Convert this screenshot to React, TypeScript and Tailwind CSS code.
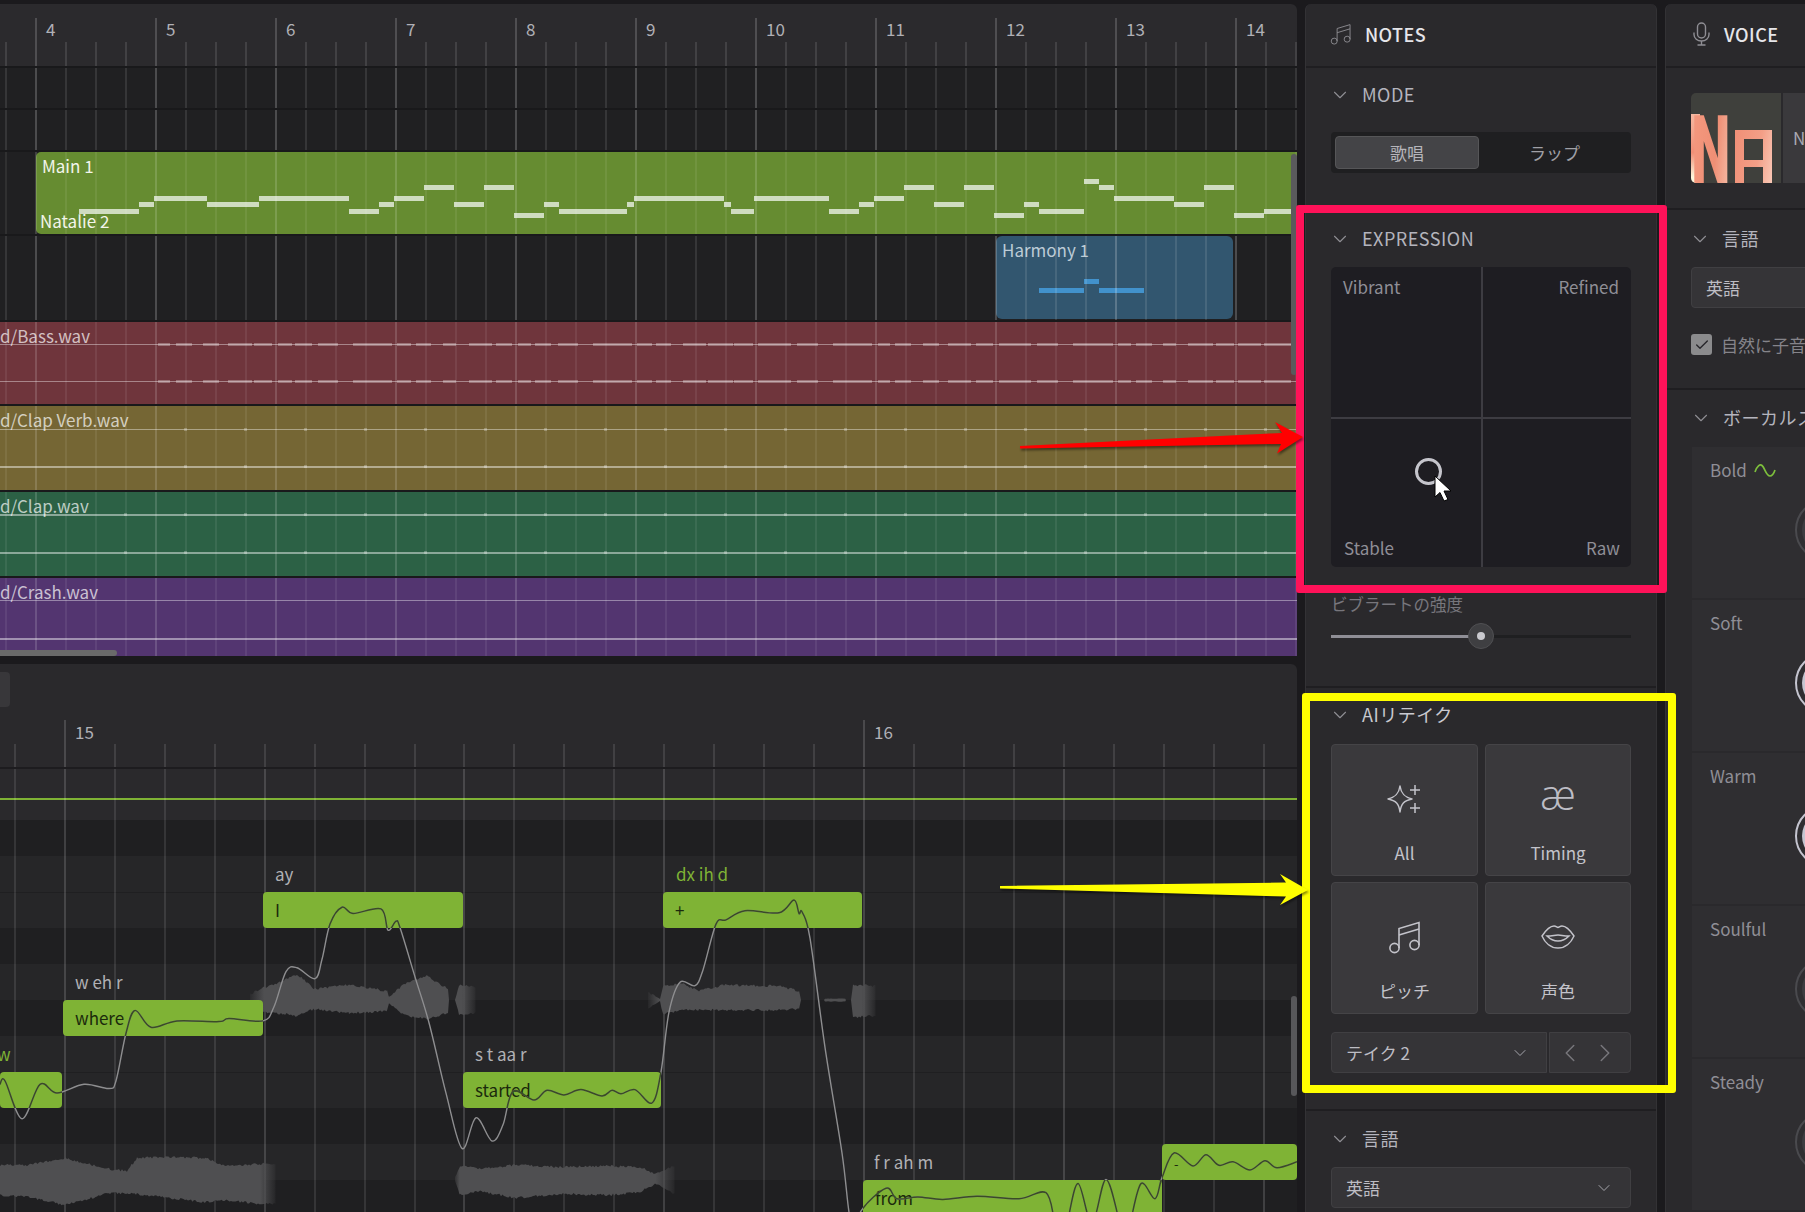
import { ChevronDown, ChevronLeft, ChevronRight, Check } from 'lucide-react';

// bar/beat grids
const topLines = Array.from({ length: 44 }, (_, i) => 5 + i * 30);
const rollLines = Array.from({ length: 26 }, (_, i) => 14 + i * 49.94);
const topBars = [4, 5, 6, 7, 8, 9, 10, 11, 12, 13, 14];

// [left, right, top]
const mainNotes = [
  [79, 139, 211], [139, 154, 204], [154, 207, 198], [207, 259, 204], [259, 349, 198], [349, 379, 211],
  [379, 394, 204], [394, 424, 198], [424, 454, 187], [454, 484, 204], [484, 514, 187], [514, 544, 215],
  [544, 559, 204], [559, 627, 211], [627, 634, 204], [634, 724, 198], [724, 731, 204], [731, 754, 211],
  [754, 829, 198], [829, 859, 211], [859, 874, 204], [874, 904, 198], [904, 934, 187], [934, 964, 204],
  [964, 994, 187], [994, 1024, 215], [1024, 1039, 204], [1039, 1084, 211], [1084, 1099, 181], [1099, 1114, 187],
  [1114, 1174, 198], [1174, 1204, 204], [1204, 1234, 187], [1234, 1264, 215], [1264, 1291, 211],
];
const harmonyNotes = [[1039, 1084, 290], [1084, 1099, 281], [1099, 1144, 290]];

const bassDashes = [
  [158, 170], [176, 192], [203, 219], [228, 252], [254, 272], [278, 292], [295, 312], [318, 338], [353, 392],
  [397, 411], [416, 431], [443, 456], [469, 492], [496, 512], [518, 531], [535, 551], [558, 578], [593, 632],
  [637, 652], [656, 671], [683, 706], [708, 733], [734, 753], [758, 791], [797, 818], [833, 872], [878, 890],
  [895, 911], [923, 939], [948, 971], [976, 993], [999, 1031], [1037, 1058], [1073, 1113], [1118, 1131],
  [1136, 1152], [1163, 1176], [1188, 1213], [1216, 1234], [1238, 1261], [1264, 1291],
];

const rollStripes = [
  'bg-[#1f1f21]', 'bg-[#262628]', 'bg-[#262628] border-t border-[#1f1f21]', 'bg-[#1f1f21]', 'bg-[#262628]', 'bg-[#1f1f21]',
  'bg-[#262628]', 'bg-[#262628] border-t border-[#1f1f21]', 'bg-[#1f1f21]', 'bg-[#262628]', 'bg-[#1f1f21]',
];

// vocal notes in page coordinates
const vocalNotes = [
  { x: 0, w: 62, y: 1072, h: 36, text: '' },
  { x: 63, w: 200, y: 1000, h: 36, text: 'where' },
  { x: 263, w: 200, y: 892, h: 36, text: 'I' },
  { x: 463, w: 198, y: 1072, h: 36, text: 'started' },
  { x: 663, w: 199, y: 892, h: 36, text: '+' },
  { x: 863, w: 299, y: 1180, h: 60, text: 'from' },
  { x: 1162, w: 135, y: 1144, h: 36, text: '-' },
];
const phonemes = [
  { x: -3, y: 1055, text: 'w', green: true },
  { x: 75, y: 983, text: 'w eh r', green: false },
  { x: 275, y: 875, text: 'ay', green: false },
  { x: 475, y: 1055, text: 's t aa r', green: false },
  { x: 676, y: 875, text: 'dx ih d', green: true },
  { x: 874, y: 1163, text: 'f r ah m', green: false },
];

// pitch line, y measured off the crop at 2.84x
const pitch = [
  [0, 1205], [5, 1195], [22, 1303], [40, 1205], [57, 1230], [84, 1205], [109, 1217], [116, 1195], [126, 1060], [135, 995],
  [151, 1043], [177, 1025], [219, 1027], [229, 1018], [263, 1025], [274, 985], [286, 885], [297, 874], [315, 905], [322, 850],
  [330, 750], [342, 702], [353, 720], [381, 707], [388, 767], [396, 742], [400, 760], [415, 900], [429, 1030], [446, 1230],
  [462, 1387], [476, 1300], [492, 1366], [503, 1320], [513, 1225], [534, 1250], [547, 1222], [564, 1235], [581, 1220],
  [602, 1238], [612, 1222], [621, 1232], [635, 1220], [652, 1258], [661, 1170], [669, 1000], [680, 915], [695, 925],
  [703, 880], [716, 750], [726, 738], [745, 712], [779, 718], [794, 682], [799, 720], [802, 715], [810, 790], [825, 1100],
  [842, 1400], [849, 1568], [855, 1640], [861, 1565], [886, 1500], [897, 1530], [918, 1525], [943, 1532], [977, 1523],
  [1019, 1530], [1046, 1513], [1055, 1600], [1061, 1640], [1067, 1600], [1078, 1487], [1092, 1600], [1106, 1475], [1120, 1600],
  [1125, 1640], [1130, 1600], [1141, 1487], [1155, 1530], [1162, 1470], [1174, 1400], [1193, 1437], [1206, 1405], [1219, 1435],
  [1233, 1425], [1250, 1448], [1265, 1422], [1277, 1442], [1297, 1425],
].map(([x, v]) => [x, 660 + v / 2.84]);

function smoothPath(pts: number[][]) {
  let d = `M${pts[0][0]} ${pts[0][1]}`;
  for (let i = 0; i < pts.length - 1; i++) {
    const p0 = pts[Math.max(i - 1, 0)];
    const p1 = pts[i];
    const p2 = pts[i + 1];
    const p3 = pts[Math.min(i + 2, pts.length - 1)];
    const c1 = [p1[0] + (p2[0] - p0[0]) / 6, p1[1] + (p2[1] - p0[1]) / 6];
    const c2 = [p2[0] - (p3[0] - p1[0]) / 6, p2[1] - (p3[1] - p1[1]) / 6];
    d += `C${c1[0].toFixed(1)} ${c1[1].toFixed(1)} ${c2[0].toFixed(1)} ${c2[1].toFixed(1)} ${p2[0]} ${p2[1].toFixed(1)}`;
  }
  return d;
}

// envelope [x, up, down] around a centre line, with a bit of jitter
function wavePath(cy: number, keys: number[][]) {
  const top: string[] = [];
  const bottom: string[] = [];
  const noise = (n: number) => {
    const s = Math.sin(n * 12.9898) * 43758.5453;
    return (s - Math.floor(s)) * 2 - 1;
  };
  for (let k = 0; k < keys.length - 1; k++) {
    const [x0, u0, d0] = keys[k];
    const [x1, u1, d1] = keys[k + 1];
    for (let x = x0; x < x1; x += 1.5) {
      const t = (x - x0) / (x1 - x0);
      const u = u0 + (u1 - u0) * t;
      const dn = d0 + (d1 - d0) * t;
      const j = Math.min(1.2, u / 6);
      top.push(`${x.toFixed(1)} ${(cy - u - noise(x) * j).toFixed(1)}`);
      bottom.unshift(`${x.toFixed(1)} ${(cy + dn + noise(x + 7) * j).toFixed(1)}`);
    }
  }
  return `M${top.join('L')}L${bottom.join('L')}Z`;
}

const waves = [
  {
    id: 'w1', x0: 248, x1: 478, fadeIn: 0.07, fadeOut: 0.93, cy: 1000,
    d: wavePath(1000, [[250, 6, 6], [263, 12, 12], [285, 20, 14], [297, 26, 16], [314, 11, 9], [349, 15, 13], [387, 9, 11], [389, 3, 3], [404, 16, 15], [427, 24, 19], [448, 11, 13], [449, 0, 0], [455, 0, 0], [459, 15, 14], [476, 13, 13]]),
  },
  {
    id: 'w2', x0: 646, x1: 878, fadeIn: 0.06, fadeOut: 0.93, cy: 1000,
    d: wavePath(1000, [[648, 8, 8], [660, 1, 1], [663, 14, 14], [682, 17, 10], [699, 9, 10], [724, 15, 10], [779, 14, 10], [799, 9, 9], [801, 0, 0], [824, 0, 0], [825, 1.5, 1.5], [845, 1.5, 1.5], [846, 0, 0], [851, 0, 0], [853, 15, 17], [876, 14, 16]]),
  },
  {
    id: 'w3', x0: -20, x1: 278, fadeIn: 0, fadeOut: 0.94, cy: 1179,
    d: wavePath(1179, [[0, 14, 16], [30, 14, 18], [64, 21, 26], [110, 10, 14], [127, 8, 14], [137, 21, 15], [170, 22, 19], [205, 21, 23], [225, 13, 21], [262, 15, 25], [276, 15, 25]]),
  },
  {
    id: 'w4', x0: 453, x1: 678, fadeIn: 0.03, fadeOut: 0.9, cy: 1179,
    d: wavePath(1179, [[455, 2, 2], [460, 13, 16], [480, 10, 12], [515, 14, 19], [560, 12, 15], [610, 13, 16], [640, 12, 13], [655, 5, 5], [664, 8, 8], [676, 14, 16]]),
  },
];

function Grid({ lines, isBar, bar = 'bg-white/20', beat = 'bg-white/10' }: {
  lines: number[]; isBar: (x: number, i: number) => boolean; bar?: string; beat?: string;
}) {
  return (
    <div className="absolute inset-0 pointer-events-none">
      {lines.map((x, i) => (
        <div key={x} className={`absolute top-0 bottom-0 w-[2px] ${isBar(x, i) ? bar : beat}`} style={{ left: x }} />
      ))}
    </div>
  );
}

const isTopBar = (x: number) => (x - 35) % 120 === 0;
const isRollBar = (_: number, i: number) => i % 4 === 1;

function Bar({ left, right, top, offset, color }: { left: number; right: number; top: number; offset: number; color: string }) {
  return <div className={`absolute h-[5px] ${color}`} style={{ left, width: right - left, top: top - offset - 2 }} />;
}

function AudioTrack({ color, name, lineTops, thick, dots, dashes }: {
  color: string; name: string; lineTops: number[]; thick?: boolean[]; dots?: number; dashes?: boolean;
}) {
  return (
    <>
      <div className={`absolute inset-0 ${color}`} />
      <span className="absolute left-0 top-[2px] text-[17px] leading-6 text-white/70 whitespace-nowrap">{name}</span>
      {lineTops.map((top, n) => (
        <div key={top} className={`absolute left-0 right-0 ${thick?.[n] ? 'h-[2px] bg-white/45' : 'h-px bg-white/40'}`} style={{ top }}>
          {dashes && bassDashes.map(([a, b]) => (
            <div key={a} className="absolute -top-px h-[3px] bg-white/30" style={{ left: a, width: b - a }} />
          ))}
          {dots !== undefined && Array.from({ length: 20 }, (_, i) => dots + i * 60).map((x) => (
            <div key={x} className="absolute -top-px h-[3px] w-[3px] bg-white/25" style={{ left: x }} />
          ))}
        </div>
      ))}
      <Grid lines={topLines} isBar={isTopBar} bar="bg-white/15" beat="bg-white/[0.07]" />
    </>
  );
}

function NotesIcon({ size, width = 1.4, className }: { size: number; width?: number; className?: string }) {
  return (
    <svg width={size} height={size} viewBox="0 0 34 34" fill="none" stroke="currentColor" strokeWidth={width} className={className}>
      <circle cx="6.5" cy="28" r="4.6" />
      <circle cx="26.5" cy="25" r="4.6" />
      <path d="M11 28V8.5L31 2.5V25" />
      <path d="M11 15L31 9" />
    </svg>
  );
}

function SectionHead({ label, bright }: { label: string; bright?: boolean }) {
  return (
    <div className="flex items-center h-[22px] -mt-px">
      <ChevronDown size={22} strokeWidth={1.2} className="text-[#8f8e94] -ml-[2px] mt-px" />
      <span className={`ml-[11px] text-[18px] tracking-[0.5px] leading-[22px] whitespace-nowrap ${bright ? 'text-[#c9c9d0] text-[17px] tracking-[0.4px]' : 'text-[#b4b4bd]'}`}>{label}</span>
    </div>
  );
}

function Select({ label, className }: { label: string; className?: string }) {
  return (
    <div className={`flex items-center justify-between h-[41px] bg-[#353437] border border-[#403f42] rounded-[4px] pl-[14px] pr-[16px] text-[17px] text-[#bdbdc4] ${className ?? ''}`}>
      <span>{label}</span>
      <ChevronDown size={20} strokeWidth={1.2} className="text-[#a5a5ab]" />
    </div>
  );
}

function RetakeButton({ label, children }: { label: string; children: React.ReactNode }) {
  return (
    <div className="flex flex-col items-center bg-[#3a393c] border border-[#454447] rounded-[4px] h-[132px] text-[#c3c3ca]">
      <div className="h-[68px] w-full flex items-end justify-center pb-[1px]">{children}</div>
      <span className="mt-[28px] text-[17px] leading-6 text-[#c3c3ca]">{label}</span>
    </div>
  );
}

function Knob({ ring, disc }: { ring: string; disc: string }) {
  return (
    <div className={`ml-[85px] mt-[17px] w-[62px] h-[62px] rounded-full border-2 flex items-center justify-center ${ring}`}>
      <div className={`w-[48px] h-[48px] rounded-full ${disc}`} />
    </div>
  );
}

export default function App() {
  return (
    <div className="relative w-[1805px] h-[1212px] overflow-hidden bg-[#1b1a1d] flex gap-2 pt-1 font-['Noto_Sans_CJK_JP','Noto_Sans',sans-serif]">
      {/* Arrangement + piano roll */}
      <div className="w-[1297px] flex-none flex flex-col gap-2">
        <div className="relative h-[652px] flex-none rounded-tr-md overflow-hidden bg-[#19191b] flex flex-col gap-[2px]">
          {/* ruler */}
          <div className="relative h-[62px] flex-none bg-[#2b2a2d]">
            {topLines.map((x) => (
              <div key={x} className={`absolute bottom-0 w-[2px] ${isTopBar(x) ? 'top-[14px] bg-[#4f4e51]' : 'top-[38px] bg-[#424144]'}`} style={{ left: x }} />
            ))}
            {topBars.map((n, i) => (
              <span key={n} className="absolute top-[13px] text-[17px] leading-6 text-[#b0b0b6]" style={{ left: 46 + i * 120 }}>{n}</span>
            ))}
          </div>
          <div className="relative h-[40px] flex-none bg-[#202022]"><Grid lines={topLines} isBar={isTopBar} /></div>
          <div className="relative h-[40px] flex-none bg-[#202022]"><Grid lines={topLines} isBar={isTopBar} /></div>

          {/* main vocal */}
          <div className="relative h-[82px] flex-none bg-[#202022]">
            <div className="absolute left-[36px] right-0 inset-y-0 bg-[#668c31] rounded-l-[5px]" />
            {mainNotes.map(([l, r, t]) => <Bar key={l} left={l} right={r} top={t} offset={152} color="bg-[#cfdcc0]" />)}
            <span className="absolute left-[42px] top-[2px] text-[17px] leading-6 text-[#f2f5ea]">Main 1</span>
            <span className="absolute left-[40px] top-[57px] text-[17px] leading-6 text-[#f2f5ea]">Natalie 2</span>
            <Grid lines={topLines} isBar={isTopBar} bar="bg-white/15" beat="bg-white/[0.07]" />
          </div>

          {/* harmony */}
          <div className="relative h-[84px] flex-none bg-[#202022]">
            <div className="absolute left-[996px] w-[237px] top-0 h-[83px] bg-[#32566f] rounded-[6px]" />
            {harmonyNotes.map(([l, r, t]) => <Bar key={l} left={l} right={r} top={t} offset={236} color="bg-[#4292cc]" />)}
            <span className="absolute left-[1002px] top-[2px] text-[17px] leading-6 text-[#bccbd6]">Harmony 1</span>
            <Grid lines={topLines} isBar={isTopBar} />
          </div>

          <div className="relative h-[82px] flex-none"><AudioTrack color="bg-[#6f353c]" name="d/Bass.wav" lineTops={[22, 59]} dashes /></div>
          <div className="relative h-[84px] flex-none"><AudioTrack color="bg-[#756634]" name="d/Clap Verb.wav" lineTops={[23, 60]} thick={[false, true]} dots={184} /></div>
          <div className="relative h-[84px] flex-none"><AudioTrack color="bg-[#2c6145]" name="d/Clap.wav" lineTops={[22, 60]} thick={[true, true]} dots={124} /></div>
          <div className="relative h-[78px] flex-none"><AudioTrack color="bg-[#533570]" name="d/Crash.wav" lineTops={[22, 60]} thick={[false, true]} /></div>

          {/* scrollbars */}
          <div className="absolute right-0 top-[150px] w-[6px] h-[221px] rounded-[3px] bg-[#5a5a5c]" />
          <div className="absolute left-0 bottom-0 w-[117px] h-[6px] rounded-r-[3px] bg-[#6a6a6a]" />
        </div>

        {/* Piano roll */}
        <div className="relative flex-1 min-h-0 rounded-tr-md overflow-hidden bg-[#2a292c] flex flex-col">
          <div className="h-[56px] flex-none pt-[8px]">
            <div className="w-[10px] h-[35px] rounded-r-[4px] bg-[#38373a]" />
          </div>
          <div className="relative h-[47px] flex-none">
            {rollLines.map((x, i) => (
              <div key={x} className={`absolute bottom-0 w-[2px] ${i % 16 === 1 ? 'top-0 bg-[#4a494c]' : 'top-[24px] bg-[#414043]'}`} style={{ left: x }} />
            ))}
            <span className="absolute left-[75px] top-0 text-[17px] leading-6 text-[#b0b0b6]">15</span>
            <span className="absolute left-[874px] top-0 text-[17px] leading-6 text-[#b0b0b6]">16</span>
          </div>
          <div className="h-[2px] flex-none bg-[#1d1c1f]" />

          <div className="relative flex-1 min-h-0 overflow-hidden">
            <div className="h-[51px] relative">
              <div className="absolute left-0 right-0 top-[29px] h-[2px] bg-[#7fb235]" />
            </div>
            {rollStripes.map((c, i) => <div key={i} className={`h-[36px] ${c}`} />)}
            <Grid lines={rollLines} isBar={isRollBar} bar="bg-white/15" />

            <svg className="absolute inset-0" width="1297" height="443" viewBox="0 769 1297 443" fill="none">
              <defs>
                {waves.map((w) => (
                  <linearGradient key={w.id} id={w.id} gradientUnits="userSpaceOnUse" x1={w.x0} x2={w.x1} y1="0" y2="0">
                    <stop offset="0" stopColor="#4f4f51" stopOpacity={w.fadeIn === 0 ? 1 : 0} />
                    <stop offset={w.fadeIn} stopColor="#4f4f51" />
                    <stop offset={w.fadeOut} stopColor="#4f4f51" />
                    <stop offset="1" stopColor="#4f4f51" stopOpacity="0" />
                  </linearGradient>
                ))}
              </defs>
              {waves.map((w) => <path key={w.id} d={w.d} fill={`url(#${w.id})`} />)}
            </svg>

            {vocalNotes.map((n) => (
              <div
                key={n.x}
                className="absolute bg-[#7fb335] rounded-[4px] pl-[12px] text-[17px] leading-[36px] text-[#1b2a0c]"
                style={{ left: n.x, top: n.y - 769, width: n.w, height: n.h }}
              >
                {n.text === '-' ? <span className="text-[13px]">-</span> : n.text}
              </div>
            ))}
            {phonemes.map((p) => (
              <span
                key={p.x}
                className={`absolute text-[17px] leading-6 whitespace-nowrap ${p.green ? 'text-[#7fb335]' : 'text-[#b0b0b4]'}`}
                style={{ left: p.x, top: p.y - 769 - 13 }}
              >
                {p.text}
              </span>
            ))}

            {/* pitch line: grey outside the notes, dark over them */}
            <svg className="absolute inset-0" width="1297" height="443" viewBox="0 769 1297 443" fill="none">
              <defs>
                <clipPath id="notes">
                  {vocalNotes.map((n) => <rect key={n.x} x={n.x} y={n.y} width={n.w} height={n.h} />)}
                </clipPath>
              </defs>
              <path d={smoothPath(pitch)} stroke="#8e8e90" strokeWidth="1.4" />
              <path d={smoothPath(pitch)} stroke="#3a4c26" strokeWidth="1.5" clipPath="url(#notes)" />
            </svg>

            <div className="absolute right-0 top-[227px] w-[6px] h-[100px] rounded-[3px] bg-[#57575a]" />
          </div>
        </div>
      </div>

      {/* NOTES */}
      <div className="w-[352px] flex-none bg-[#2a292c] rounded-t-md overflow-hidden flex flex-col border-x border-[#333235]">
        <div className="h-[62px] flex-none flex items-center pl-[24px] pb-[2px]">
          <NotesIcon size={22} className="text-[#8f8e94]" />
          <span className="ml-[13px] text-[18px] font-medium tracking-[0.4px] text-[#e6e6ea]">NOTES</span>
        </div>
        <div className="h-[2px] flex-none bg-[#1f1e21]" />

        <div className="h-[137px] flex-none pt-[16px] px-[25px]">
          <SectionHead label="MODE" />
          <div className="mt-[27px] h-[41px] w-[300px] rounded-[4px] bg-[#1f1f21] p-[4px] flex text-[17px] text-[#a0a0a6]">
            <div className="w-[144px] rounded-[4px] bg-[#444447] border border-[#565658] flex items-center justify-center text-[#b5b5ba] leading-none">歌唱</div>
            <div className="flex-1 flex items-center justify-center pl-[3px] leading-none">ラップ</div>
          </div>
        </div>

        <div className="h-[481px] flex-none pt-[23px] px-[25px]">
          <SectionHead label="EXPRESSION" />
          <div className="relative mt-[18px] w-[300px] h-[300px] rounded-[5px] bg-[#1e1d22] text-[17px] text-[#8f8e96] overflow-hidden">
            <div className="absolute left-[150px] inset-y-0 w-[2px] bg-[#3d3c42]" />
            <div className="absolute top-[150px] inset-x-0 h-[2px] bg-[#3d3c42]" />
            <span className="absolute left-[12px] top-[8px] leading-6">Vibrant</span>
            <span className="absolute right-[12px] top-[8px] leading-6">Refined</span>
            <span className="absolute left-[13px] bottom-[7px] leading-6">Stable</span>
            <span className="absolute right-[11px] bottom-[7px] leading-6">Raw</span>
            <div className="absolute left-[84px] top-[191px] w-[27px] h-[27px] rounded-full border-[3px] border-[#c5c5cc]" />
            <svg className="absolute left-[103px] top-[208px]" width="20" height="28" viewBox="0 0 20 28">
              <path d="M1 1V22L6 17.5L10 26L14 24.5L10 16H17Z" fill="#fff" stroke="#000" strokeWidth="1" />
            </svg>
          </div>
          <div className="mt-[26px] text-[16.5px] leading-[22px] text-[#77767c] whitespace-nowrap">ビブラートの強度</div>
          <div className="relative mt-[8px] h-[26px] flex items-center">
            <div className="w-[150px] h-[3px] bg-[#8f8e96]" />
            <div className="flex-1 h-[3px] bg-[#1f1f21]" />
            <div className="absolute left-[137px] top-0 w-[26px] h-[26px] rounded-full bg-[#3f3f42] border border-[#505053] flex items-center justify-center">
              <div className="w-[8px] h-[8px] rounded-full bg-[#c9c9ce]" />
            </div>
          </div>
        </div>
        <div className="h-[2px] flex-none bg-[#1f1e21]" />

        <div className="h-[421px] flex-none pt-[16px] px-[25px]">
          <SectionHead label="AIリテイク" bright />
          <div className="mt-[19px] w-[300px] grid grid-cols-[147px_146px] gap-x-[7px] gap-y-[6px]">
            <RetakeButton label="All">
              <svg width="36" height="36" viewBox="0 0 36 36" fill="none" stroke="currentColor" strokeWidth="1.5" className="mb-[-4px]">
                <path d="M13 6C14 13 17 17 25 19C17 20.5 14 24 13 32C12 24 9 20.5 1 19C9 17 12 13 13 6Z" strokeLinejoin="round" />
                <path d="M28 5V15M23 10H33M28 23V33M23 28H33" />
              </svg>
            </RetakeButton>
            <RetakeButton label="Timing">
              <span className="font-['Open_Sans',sans-serif] font-light text-[42px] leading-[40px] text-[#bdbdc5] -mb-[2px]">æ</span>
            </RetakeButton>
            <RetakeButton label="ピッチ">
              <NotesIcon size={34} width={1.6} className="mb-[-4px]" />
            </RetakeButton>
            <RetakeButton label="声色">
              <svg width="34" height="24" viewBox="0 0 34 24" fill="none" stroke="currentColor" strokeWidth="1.5" className="mb-[1px]">
                <path d="M1 11C5 5 10 1 13 1C15 1 16 2.5 17 2.5C18 2.5 19 1 21 1C24 1 29 5 33 11C30 18 24 23 17 23C10 23 4 18 1 11Z" />
                <path d="M6 11C11 11 14 10 17 10C20 10 23 11 28 11C24 15 21 16 17 16C13 16 10 15 6 11Z" />
              </svg>
            </RetakeButton>
          </div>
          <div className="mt-[18px] w-[300px] flex gap-[2px]">
            <Select label="テイク 2" className="w-[216px] rounded-r-none pr-[15px]" />
            <div className="flex-1 h-[41px] bg-[#353437] border border-[#403f42] rounded-r-[4px] flex items-center justify-center gap-[5px] pr-[5px] text-[#77767b]">
              <ChevronLeft size={30} strokeWidth={1.2} />
              <ChevronRight size={30} strokeWidth={1.2} />
            </div>
          </div>
        </div>
        <div className="h-[2px] flex-none bg-[#1f1e21]" />

        <div className="flex-1 pt-[17px] px-[25px]">
          <SectionHead label="言語" />
          <Select label="英語" className="mt-[18px] w-[300px]" />
        </div>
      </div>

      {/* VOICE */}
      <div className="flex-1 min-w-0 bg-[#2a292c] rounded-tl-md overflow-hidden flex flex-col border-l border-[#333235]">
        <div className="h-[62px] flex-none flex items-center pl-[27px] pb-[2px]">
          <svg width="17" height="24" viewBox="0 0 17 24" fill="none" stroke="#8f8e94" strokeWidth="1.4">
            <rect x="4.5" y="1" width="8" height="15" rx="4" />
            <path d="M1 10.5V12.5C1 16.5 4.4 19 8.5 19C12.6 19 16 16.5 16 12.5V10.5" />
            <path d="M8.5 19V23M4.5 23H12.5" />
          </svg>
          <span className="ml-[14px] text-[18px] font-medium tracking-[0.5px] text-[#e6e6ea]">VOICE</span>
        </div>
        <div className="h-[2px] flex-none bg-[#1f1e21]" />

        <div className="h-[140px] flex-none pt-[25px] pl-[25px] flex gap-[2px] w-[400px]">
          <div className="relative w-[90px] h-[90px] flex-none rounded-l-[5px] overflow-hidden bg-[#3f403c]">
            <div className="absolute left-0 top-[21px] bottom-0 w-[9px] bg-[linear-gradient(170deg,#f6b9a2,#f08f76_55%,#fdf6dc_90%)]" />
            <span className="absolute left-[-14px] top-[-2px] h-[120px] origin-center scale-x-[0.58] font-['Roboto',sans-serif] font-black text-[96px] leading-[120px] text-transparent bg-clip-text bg-[linear-gradient(100deg,#f59a80,#ef8f75_60%,#f6c3ae)]">N</span>
            <div className="absolute left-[44px] top-[37px] w-[37px] h-[53px] bg-[linear-gradient(100deg,#f08f76,#f39f87_60%,#f9c8b6)]">
              <div className="absolute left-[9px] right-[9px] top-[9px] h-[21px] bg-[#3f403c]" />
              <div className="absolute left-[9px] right-[9px] bottom-0 h-[16px] bg-[#3f403c]" />
            </div>
          </div>
          <div className="w-[200px] h-[90px] rounded-r-[5px] bg-[#3a393c] flex items-center pl-[10px] text-[17px] text-[#a9a9b3]">Natalie 2</div>
        </div>
        <div className="h-[2px] flex-none bg-[#1f1e21]" />

        <div className="h-[178px] flex-none pt-[18px] pl-[25px] w-[400px]">
          <SectionHead label="言語" />
          <Select label="英語" className="mt-[18px] w-[300px]" />
          <div className="mt-[26px] flex items-center gap-[9px]">
            <div className="w-[21px] h-[21px] rounded-[3px] bg-[#8b8b8d] flex items-center justify-center">
              <Check size={16} strokeWidth={2} className="text-[#26252a]" />
            </div>
            <span className="text-[17px] leading-[21px] text-[#85848a] whitespace-nowrap">自然に子音を変化</span>
          </div>
        </div>
        <div className="h-[2px] flex-none bg-[#1f1e21]" />

        <div className="flex-1 pt-[17px] pl-[26px] w-[400px]">
          <SectionHead label="ボーカルスタイル" />
          <div className="mt-[19px] flex flex-col gap-[2px]">
            <div className="h-[151px] bg-[#2f2e31] pt-[11px] pl-[18px]">
              <div className="flex items-center gap-[7px] h-6 text-[17px] text-[#8f8e96]">
                Bold
                <svg width="22" height="14" viewBox="0 0 22 14" fill="none" stroke="#7dbf3c" strokeWidth="1.7">
                  <path d="M1 9C3 3 6 1 8 2.5C11 5 12 13 16 13C18 13 20 10 21 7" />
                </svg>
              </div>
              <Knob ring="border-[#4a4a4e]" disc="bg-[#3d3d41]" />
            </div>
            <div className="h-[151px] bg-[#2f2e31] pt-[11px] pl-[18px]">
              <div className="h-6 leading-6 text-[17px] text-[#8f8e96]">Soft</div>
              <Knob ring="border-[#c5c5d0]" disc="bg-[#c5c5d0]" />
            </div>
            <div className="h-[151px] bg-[#2f2e31] pt-[11px] pl-[18px]">
              <div className="h-6 leading-6 text-[17px] text-[#8f8e96]">Warm</div>
              <Knob ring="border-[#c5c5d0]" disc="bg-[#c5c5d0]" />
            </div>
            <div className="h-[151px] bg-[#2f2e31] pt-[11px] pl-[18px]">
              <div className="h-6 leading-6 text-[17px] text-[#8f8e96]">Soulful</div>
              <Knob ring="border-[#4a4a4e]" disc="bg-[#3d3d41]" />
            </div>
            <div className="h-[151px] bg-[#2f2e31] pt-[11px] pl-[18px]">
              <div className="h-6 leading-6 text-[17px] text-[#8f8e96]">Steady</div>
              <Knob ring="border-[#4a4a4e]" disc="bg-[#3d3d41]" />
            </div>
          </div>
        </div>
      </div>

      {/* Annotations on top of the screenshot */}
      <div className="absolute left-[1296px] top-[205px] w-[371px] h-[388px] border-8 border-[#ff1259] rounded-[3px] pointer-events-none" />
      <div className="absolute left-[1302px] top-[693px] w-[374px] h-[400px] border-8 border-[#ffff00] rounded-[3px] pointer-events-none" />
      <svg className="absolute inset-0 pointer-events-none drop-shadow-[1px_2px_1px_rgba(0,0,0,0.45)]" width="1805" height="1212" viewBox="0 0 1805 1212">
        <path d="M1020 446L1282 433L1275 422L1303 437L1277 453.5L1281 444L1020 448.5Z" fill="#ff0000" />
        <path d="M1000 886L1286 882.5L1280 874L1308 890L1280 905L1286 896.5L1000 888.5Z" fill="#ffff00" />
      </svg>
    </div>
  );
}
